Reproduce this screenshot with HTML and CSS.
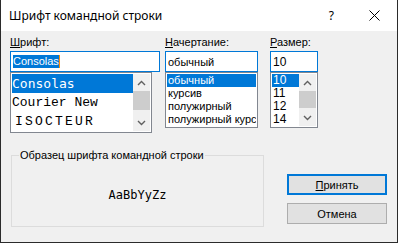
FILE: index.html
```html
<!DOCTYPE html>
<html lang="ru">
<head>
<meta charset="utf-8">
<title>Шрифт командной строки</title>
<link rel="stylesheet" href="styles.css">
</head>
<body>
<div class="window">
  <div class="titlebar">
    <span class="title">Шрифт командной строки</span>
    <span class="help">?</span>
    <svg class="close" width="11" height="11" viewBox="0 0 11 11"><path d="M0.5 0.5L10.5 10.5M10.5 0.5L0.5 10.5" stroke="#000" stroke-width="1" fill="none"/></svg>
  </div>
  <div class="content">
    <div class="pickers">
      <div class="col col-font">
        <div class="label"><u>Ш</u>рифт:</div>
        <div class="input"><span class="sel">Consolas</span></div>
        <div class="list list-font">
          <div class="rows">
            <div class="row selected f-consolas">Consolas</div>
            <div class="row f-courier">Courier New</div>
            <div class="row f-isocteur">ISOCTEUR</div>
          </div>
          <div class="scrollbar">
            <div class="sb-btn"><svg width="9" height="6" viewBox="0 0 9 6"><path d="M1 5L4.5 1.5L8 5" stroke="#606060" stroke-width="1.4" fill="none"/></svg></div>
            <div class="sb-thumb thumb-font"></div>
            <div class="sb-track"></div>
            <div class="sb-btn"><svg width="9" height="6" viewBox="0 0 9 6"><path d="M1 1L4.5 4.5L8 1" stroke="#606060" stroke-width="1.4" fill="none"/></svg></div>
          </div>
        </div>
      </div>
      <div class="col col-style">
        <div class="label"><u>Н</u>ачертание:</div>
        <div class="input">обычный</div>
        <div class="list list-style">
          <div class="rows">
            <div class="row selected">обычный</div>
            <div class="row">курсив</div>
            <div class="row">полужирный</div>
            <div class="row">полужирный курс</div>
          </div>
        </div>
      </div>
      <div class="col col-size">
        <div class="label"><u>Р</u>азмер:</div>
        <div class="input size-text">10</div>
        <div class="list list-size">
          <div class="rows">
            <div class="row selected">10</div>
            <div class="row">11</div>
            <div class="row">12</div>
            <div class="row">14</div>
          </div>
          <div class="scrollbar">
            <div class="sb-btn"><svg width="9" height="6" viewBox="0 0 9 6"><path d="M1 5L4.5 1.5L8 5" stroke="#606060" stroke-width="1.4" fill="none"/></svg></div>
            <div class="sb-thumb thumb-size"></div>
            <div class="sb-track"></div>
            <div class="sb-btn"><svg width="9" height="6" viewBox="0 0 9 6"><path d="M1 1L4.5 4.5L8 1" stroke="#606060" stroke-width="1.4" fill="none"/></svg></div>
          </div>
        </div>
      </div>
    </div>
    <div class="bottom">
      <fieldset class="sample">
        <legend>Образец шрифта командной строки</legend>
        <div class="sample-text">AaBbYyZz</div>
      </fieldset>
      <div class="buttons">
        <button class="btn btn-default"><u>П</u>ринять</button>
        <button class="btn">Отмена</button>
      </div>
    </div>
  </div>
</div>
</body>
</html>
```
FILE: styles.css
```css
* { box-sizing: border-box; }
html, body { margin: 0; padding: 0; }
body {
  width: 398px;
  height: 243px;
  overflow: hidden;
  background: #f0f0f0;
  font-family: "Liberation Sans", Arial, sans-serif;
  font-size: 11px;
  color: #000;
}
.window {
  width: 398px;
  height: 243px;
  display: flex;
  flex-direction: column;
  border: 1px solid #2b2b2b;
  border-top: none;
  background: #f0f0f0;
}
.titlebar {
  flex: none;
  height: 31px;
  background: #fff;
  display: flex;
  align-items: center;
  font-family: "Noto Sans", sans-serif;
  font-size: 12px;
}
.title { padding-left: 8px; }
.help { margin-left: auto; margin-right: 35px; }
.close { margin-right: 17px; }
.content {
  flex: 1;
  padding: 5px 0 0 9px;
}
.pickers { display: flex; align-items: flex-start; }
.col { display: flex; flex-direction: column; }
.col-font { width: 150px; }
.col-style { width: 93px; margin-left: 5px; }
.col-size { width: 48px; margin-left: 12px; }
.label { height: 13px; line-height: 13px; white-space: nowrap; }
.input {
  margin-top: 2px;
  height: 21px;
  border: 1px solid #0078d7;
  background: #fff;
  padding-left: 2px;
  display: flex;
  align-items: center;
  white-space: nowrap;
}
.sel {
  background: #0078d7;
  color: #fff;
  line-height: 13px;
  border-right: 1px solid #ff8c00;
}
.size-text { font-size: 12px; }
.list {
  background: #fff;
  border: 1px solid #828790;
  padding: 1px;
  display: flex;
  overflow: hidden;
}
.list-font { width: 142px; height: 61px; }
.list-style { width: 93px; height: 56px; }
.list-size { width: 48px; height: 56px; font-size: 12px; }
.rows { flex: 1; min-width: 0; overflow: hidden; }
.row { white-space: nowrap; overflow: hidden; height: 13px; line-height: 13px; padding-left: 1px; }
.list-font .row { height: 19px; line-height: 19px; font-size: 13px; padding-left: 0; }
.selected { background: #0078d7; color: #fff; }
.f-consolas { font-family: "DejaVu Sans Mono", monospace; }
.f-courier { font-family: "Liberation Mono", monospace; }
.f-isocteur { font-family: "Liberation Mono", monospace; font-size: 12px; letter-spacing: 2.2px; padding-left: 3px !important; }
.scrollbar {
  width: 17px;
  flex: none;
  background: #f0f0f0;
  display: flex;
  flex-direction: column;
}
.sb-btn { height: 17px; display: flex; align-items: center; justify-content: center; flex: none; }
.sb-thumb { background: #cdcdcd; flex: none; }
.thumb-font { height: 19px; }
.thumb-size { height: 17px; }
.sb-track { flex: 1; }
.bottom { display: flex; margin-top: 16px; }
.sample {
  margin: 0 0 0 1px;
  padding: 0;
  width: 253px;
  height: 78px;
  border: 1px solid #dcdcdc;
  min-width: 0;
}
.sample legend {
  margin-left: 7px;
  padding: 0 1px;
  line-height: 13px;
  font-size: 11px;
}
.sample-text {
  margin-top: 26px;
  text-align: center;
  font-family: "DejaVu Sans Mono", monospace;
  font-size: 12px;
  line-height: 14px;
}
.buttons {
  margin-left: 23px;
  padding-top: 25px;
  display: flex;
  flex-direction: column;
  gap: 8px;
}
.btn {
  width: 100px;
  height: 21px;
  margin: 0;
  padding: 0;
  background: #e1e1e1;
  border: 1px solid #adadad;
  font-family: "Liberation Sans", Arial, sans-serif;
  font-size: 11px;
  color: #000;
  border-radius: 0;
}
.btn-default { border: 2px solid #0078d7; }
```
